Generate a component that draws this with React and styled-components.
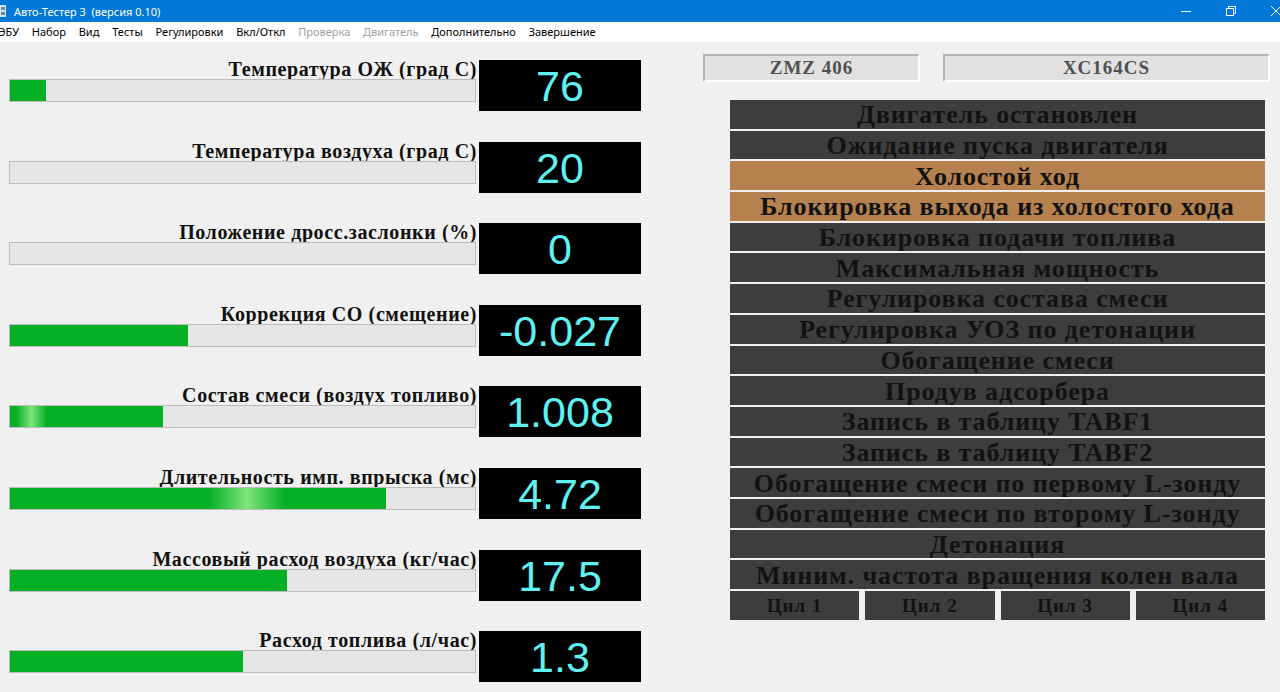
import React from 'react';
import styled, { createGlobalStyle } from 'styled-components';

const Global = createGlobalStyle`
  html, body { margin: 0; padding: 0; }
  body { width: 1280px; height: 692px; overflow: hidden; background: #f0f0f0; }
`;

const sensors = [
  { label: 'Температура ОЖ (град С)', value: '76', fill: 7.7 },
  { label: 'Температура воздуха (град С)', value: '20', fill: 0 },
  { label: 'Положение дросс.заслонки (%)', value: '0', fill: 0 },
  { label: 'Коррекция СО (смещение)', value: '-0.027', fill: 38.2 },
  { label: 'Состав смеси (воздух топливо)', value: '1.008', fill: 33, glow: 14 },
  { label: 'Длительность имп. впрыска (мс)', value: '4.72', fill: 80.8, glow: 63 },
  { label: 'Массовый расход воздуха (кг/час)', value: '17.5', fill: 59.6 },
  { label: 'Расход топлива (л/час)', value: '1.3', fill: 50 },
];

const modes = [
  ['Двигатель остановлен', false],
  ['Ожидание пуска двигателя', false],
  ['Холостой ход', true],
  ['Блокировка выхода из холостого хода', true],
  ['Блокировка подачи топлива', false],
  ['Максимальная мощность', false],
  ['Регулировка состава смеси', false],
  ['Регулировка УОЗ по детонации', false],
  ['Обогащение смеси', false],
  ['Продув адсорбера', false],
  ['Запись в таблицу TABF1', false],
  ['Запись в таблицу TABF2', false],
  ['Обогащение смеси по первому L-зонду', false],
  ['Обогащение смеси по второму L-зонду', false],
  ['Детонация', false],
  ['Миним. частота вращения колен вала', false],
];

const menu = [
  ['ЭБУ', false], ['Набор', false], ['Вид', false], ['Тесты', false],
  ['Регулировки', false], ['Вкл/Откл', false], ['Проверка', true],
  ['Двигатель', true], ['Дополнительно', false], ['Завершение', false],
];

const Window = styled.div`
  width: 1280px;
  height: 692px;
  display: flex;
  flex-direction: column;
  background: #f0f0f0;
  overflow: hidden;
`;

const TitleBar = styled.div`
  height: 22px;
  background: #0078d7;
  display: flex;
  align-items: center;
  color: #fff;
  font: 11px "Noto Sans", "DejaVu Sans", sans-serif;
`;

const AppIcon = styled.svg`
  width: 8px;
  height: 14px;
  margin-right: 6px;
`;

const TitleText = styled.span`
  flex: 1;
  white-space: pre;
`;

const WinButtons = styled.div`
  display: flex;
  height: 22px;
  margin-right: -18px;
`;

const WinButton = styled.div`
  width: 45px;
  display: flex;
  align-items: center;
  justify-content: center;
`;

const MenuBar = styled.div`
  height: 19px;
  background: #fff;
  display: flex;
  align-items: center;
  margin-left: -8px;
  padding-bottom: 1px;
  font: 11px "Noto Sans", "DejaVu Sans", sans-serif;
`;

const MenuItem = styled.span`
  padding: 0 6.4px;
  color: ${p => (p.$disabled ? '#a0a0a0' : '#000')};
`;

const Body = styled.div`
  flex: 1;
  display: flex;
  padding-left: 9px;
`;

const Gauges = styled.div`
  display: flex;
  flex-direction: column;
  gap: 39.6px;
  padding-top: 18px;
`;

const GaugeRow = styled.div`
  display: grid;
  grid-template-columns: 467px 162px;
  column-gap: 3px;
  height: 42px;
`;

const GaugeLeft = styled.div`
  display: flex;
  flex-direction: column;
`;

const GaugeLabel = styled.div`
  height: 19px;
  text-align: right;
  white-space: nowrap;
  font: bold 20px/18px "Liberation Serif", "DejaVu Serif", serif;
  letter-spacing: 0.6px;
  margin-right: -1px;
  color: #111;
  box-sizing: border-box;
`;

const Bar = styled.div`
  height: 23px;
  box-sizing: border-box;
  border: 1px solid #bcbcbc;
  background: #e6e6e6;
`;

const BarFill = styled.div`
  height: 100%;
  background: ${p =>
    p.$glow != null
      ? `linear-gradient(90deg, #06b025 0%, #06b025 ${p.$glow - 10}%, #7fe47f ${p.$glow}%, #06b025 ${p.$glow + 10}%, #06b025 100%)`
      : '#06b025'};
`;

const ValueBox = styled.div`
  background: #000;
  color: #5ff2f2;
  display: flex;
  align-items: center;
  justify-content: center;
  font: 43px "Liberation Sans", Arial, sans-serif;
  padding-top: 2px;
  box-sizing: border-box;
`;

const Side = styled.div`
  margin-left: 62px;
  padding-top: 12px;
  display: flex;
  flex-direction: column;
`;

const Chips = styled.div`
  display: flex;
  gap: 23px;
`;

const Chip = styled.div`
  width: ${p => p.$w}px;
  height: 28px;
  box-sizing: border-box;
  background: #e1e1e1;
  border-top: 2px solid #b4b4b4;
  border-left: 2px solid #b4b4b4;
  border-right: 2px solid #fff;
  border-bottom: 2px solid #fff;
  display: flex;
  align-items: center;
  justify-content: center;
  color: #505050;
  font: bold 19px "Liberation Serif", "DejaVu Serif", serif;
  letter-spacing: 1px;
`;

const Modes = styled.div`
  margin: 18px 0 0 27px;
  width: 535px;
  display: flex;
  flex-direction: column;
  gap: 2px;
`;

const Mode = styled.div`
  height: 28.7px;
  background: ${p => (p.$on ? '#b5814f' : '#3d3d3d')};
  display: flex;
  align-items: center;
  justify-content: center;
  color: #121212;
  font: bold 26px "Liberation Serif", "DejaVu Serif", serif;
  letter-spacing: 0.9px;
  white-space: nowrap;
  padding-top: 2px;
  box-sizing: border-box;
`;

const Cylinders = styled.div`
  display: grid;
  grid-template-columns: repeat(4, 1fr);
  gap: 6px;
`;

const Cyl = styled(Mode)`
  font-size: 19px;
  letter-spacing: 1px;
`;

export default function App() {
  return (
    <Window>
      <Global />
      <TitleBar>
        <AppIcon viewBox="0 0 8 14">
          <rect x="0" y="1" width="6" height="12" fill="#d8e4ee" />
          <rect x="1" y="3" width="4" height="3" fill="#6a8aa8" />
          <rect x="1" y="8" width="4" height="3" fill="#6a8aa8" />
        </AppIcon>
        <TitleText>Авто-Тестер 3  (версия 0.10)</TitleText>
        <WinButtons>
          <WinButton>
            <svg width="10" height="10" viewBox="0 0 10 10">
              <path d="M0 5.5h10" stroke="#fff" strokeWidth="1" />
            </svg>
          </WinButton>
          <WinButton>
            <svg width="10" height="10" viewBox="0 0 10 10">
              <path d="M0.5 2.5h7v7h-7z M2.5 2.5v-2h7v7h-2" stroke="#fff" fill="none" strokeWidth="1" />
            </svg>
          </WinButton>
          <WinButton>
            <svg width="10" height="10" viewBox="0 0 10 10">
              <path d="M0 0l10 10M10 0L0 10" stroke="#fff" strokeWidth="1" />
            </svg>
          </WinButton>
        </WinButtons>
      </TitleBar>
      <MenuBar>
        {menu.map(([t, d]) => (
          <MenuItem key={t} $disabled={d}>{t}</MenuItem>
        ))}
      </MenuBar>
      <Body>
        <Gauges>
          {sensors.map(s => (
            <GaugeRow key={s.label}>
              <GaugeLeft>
                <GaugeLabel>{s.label}</GaugeLabel>
                <Bar>
                  <BarFill $glow={s.glow} style={{ width: `${s.fill}%` }} />
                </Bar>
              </GaugeLeft>
              <ValueBox>{s.value}</ValueBox>
            </GaugeRow>
          ))}
        </Gauges>
        <Side>
          <Chips>
            <Chip $w={217}>ZMZ 406</Chip>
            <Chip $w={327}>XC164CS</Chip>
          </Chips>
          <Modes>
            {modes.map(([t, on]) => (
              <Mode key={t} $on={on}>{t}</Mode>
            ))}
            <Cylinders>
              {[1, 2, 3, 4].map(n => (
                <Cyl key={n}>Цил {n}</Cyl>
              ))}
            </Cylinders>
          </Modes>
        </Side>
      </Body>
    </Window>
  );
}
